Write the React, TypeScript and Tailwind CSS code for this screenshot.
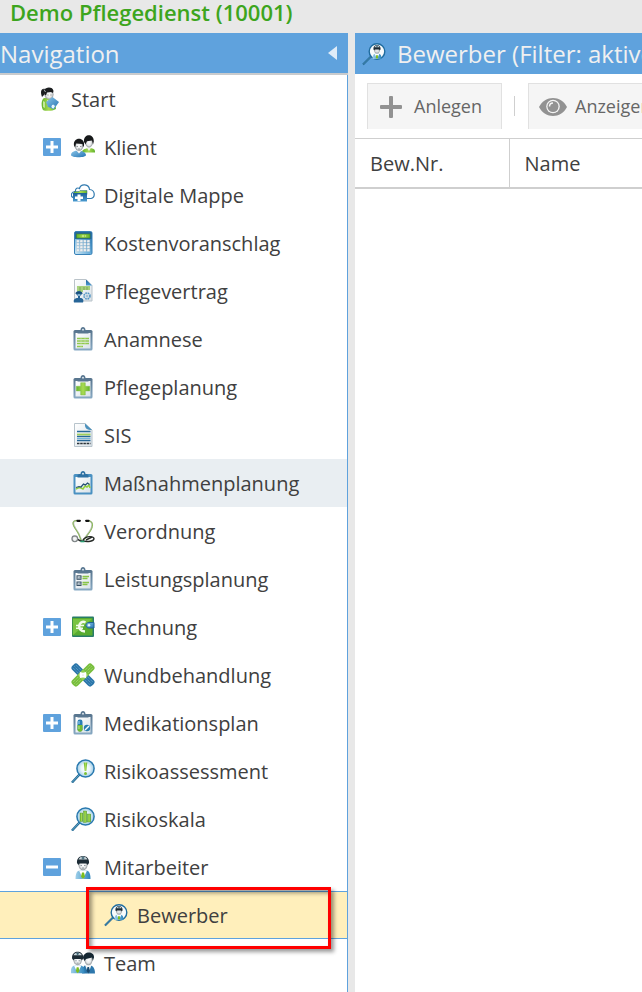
import type { ReactNode } from "react";

const Svg = ({ children, size = 24 }: { children: ReactNode; size?: number }) => (
  <svg width={size} height={size} viewBox="0 0 24 24" fill="none" aria-hidden="true" className="block shrink-0">
    {children}
  </svg>
);

/* Gradients shared by all the navigation icons */
const IconDefs = () => (
  <svg width="0" height="0" className="absolute" aria-hidden="true">
    <defs>
      <linearGradient id="blue" x1="0" y1="0" x2="1" y2="1">
        <stop offset="0" stopColor="#8cc6e8" />
        <stop offset="1" stopColor="#2474b4" />
      </linearGradient>
      <linearGradient id="dark" x1="0" y1="0" x2="0" y2="1">
        <stop offset="0" stopColor="#1c5e96" />
        <stop offset="1" stopColor="#4a9bd0" />
      </linearGradient>
      <linearGradient id="green" x1="0" y1="0" x2="1" y2="0">
        <stop offset="0" stopColor="#62b32c" />
        <stop offset="0.5" stopColor="#a8da52" />
        <stop offset="1" stopColor="#62b32c" />
      </linearGradient>
      <linearGradient id="steel" x1="0" y1="0" x2="0" y2="1">
        <stop offset="0" stopColor="#56738c" />
        <stop offset="1" stopColor="#88aac4" />
      </linearGradient>
      <linearGradient id="paper" x1="0" y1="0" x2="1" y2="1">
        <stop offset="0" stopColor="#ffffff" />
        <stop offset="1" stopColor="#d9e2e8" />
      </linearGradient>
      <linearGradient id="calc" x1="0" y1="1" x2="1" y2="0">
        <stop offset="0" stopColor="#d4edf8" />
        <stop offset="0.5" stopColor="#63a9d7" />
        <stop offset="1" stopColor="#1d68a5" />
      </linearGradient>
      <linearGradient id="coat" x1="0" y1="0" x2="1" y2="0">
        <stop offset="0" stopColor="#9fd0ea" />
        <stop offset="1" stopColor="#2f86bd" />
      </linearGradient>
      <radialGradient id="face">
        <stop offset="0" stopColor="#ffffff" />
        <stop offset="0.6" stopColor="#e6e8e9" />
        <stop offset="1" stopColor="#8e9498" />
      </radialGradient>
      <radialGradient id="glass">
        <stop offset="0" stopColor="#ffffff" />
        <stop offset="0.5" stopColor="#eaf5fa" />
        <stop offset="1" stopColor="#9ccbe6" />
      </radialGradient>
    </defs>
  </svg>
);

const StartIcon = () => (
  <Svg>
    <path d="M6 11c-3 2-3 8-1 12 3 1.500 10 1 13-1l-1-7-6-4Z" fill="url(#green)" />
    <path d="m5 14 2 1v6l-2-1Z" fill="#c3e89a" />
    <path d="m9 13 3 2-2 4Z" fill="#f2f6ee" />
    <ellipse cx="11" cy="7.500" rx="4.500" ry="5" fill="url(#face)" />
    <path d="M6 3c2-3.500 9-3.500 9.500 1l-.5 2-2-1-4 .5-1 3-1.500-1L6 6Z" fill="#1b1e20" />
    <path d="M7 2C3 1 2 5 4 10l2-2 1-3Z" fill="#1b1e20" />
    <path d="M6 2.500 7.500 5" stroke="#cfd5d8" strokeWidth=".8" />
    <path d="M9.500 8h1m2 0h1" stroke="#555" strokeWidth=".8" />
    <path d="m8 15 6.500-5 6.500 5-5 7-6-2Z" fill="url(#blue)" />
    <path d="m13 19 2-2 2.500 2-2 3-2-1Z" fill="#e8f6fc" stroke="#408fc5" strokeWidth=".6" />
  </Svg>
);

const KlientIcon = () => (
  <Svg>
    <path d="M11 17c0-4 12-6 13-1v1.500H13Z" fill="url(#green)" />
    <path d="m15.500 12 2.500 4 2.500-4Z" fill="#f2f2f2" />
    <ellipse cx="18" cy="7.500" rx="3.800" ry="5" fill="url(#face)" />
    <path d="M13 7c-1-8.500 10-9 9.800-.5l-.8 3-1-4-5 .8-1.500 3Z" fill="#17191a" />
    <path d="M0 20c0-6 14-6 15 0 0 3-15 3-15 0Z" fill="url(#blue)" />
    <path d="m5 15 3 3.500 3-3.500Z" fill="#f8f8f8" />
    <ellipse cx="8" cy="11" rx="4.200" ry="5" fill="url(#face)" />
    <path d="M3 10.500c-1.500-9 11.500-9 10 0l-1 2-.5-3.500-6.500-.5-1 4Z" fill="#17191a" />
    <path d="M5.500 11.500H7m2 0h1.500M7 14h2" stroke="#6d7376" strokeWidth=".7" />
  </Svg>
);

const MappeIcon = () => (
  <Svg>
    <path d="M4 15C-1 15-1 9 4.500 8.500 4 5 7 4.500 8.500 5.500 10 0 18 1 18.500 6.500 24.500 7 24.500 14.500 20 15.500h-4" fill="#fff" stroke="#317aaf" strokeWidth="1.200" />
    <path d="M3 8.500h5l1-1h7v4H3Z" fill="url(#green)" stroke="#2d6b8e" strokeWidth=".5" />
    <path d="M2 10h14v8.500H2Z" fill="url(#dark)" />
    <path d="M6.500 11.500h3v2H12v2.500H9.500v2h-3v-2H4v-2.500h2.500Z" fill="#fff" />
  </Svg>
);

const CalcIcon = () => (
  <Svg>
    <rect x="3.500" y="0.500" width="17.500" height="23" rx="1.500" fill="url(#calc)" stroke="#3982b8" />
    <rect x="4" y="1" width="16.500" height="7" fill="#25689c" />
    <rect x="5.500" y="3" width="13.500" height="4" fill="url(#green)" stroke="#3f852c" strokeWidth=".6" />
    <path d="M11 5h2m1 0h1" stroke="#d8f3ad" />
    {[9, 12, 15, 18].map((y) =>
      [5.5, 9, 12.5, 16].map((x) => (
        <rect key={`${x}-${y}`} x={x} y={y} width="2.800" height="2.400" rx=".5" fill="#f0f2f2" stroke="#a5b8c4" strokeWidth=".3" />
      )),
    )}
  </Svg>
);

const VertragIcon = () => (
  <Svg>
    <path d="M3.500 .5H15l6 6v15.500H3.500Z" fill="url(#paper)" stroke="#bac3c9" />
    <path d="M15 .5v6h6Z" fill="url(#dark)" />
    <path d="M6 8h13M6 10h13M6 12h6" stroke="#8fc653" strokeWidth="1.400" />
    <path d="M9 8v4m4-4v3m3-3v3" stroke="#54783b" strokeWidth=".5" />
    <circle cx="16" cy="17" r="3" stroke="#5596c4" strokeWidth="1.600" strokeDasharray="1.700 .7" />
    <circle cx="16" cy="17" r="1" fill="#fff" stroke="#3475a5" strokeWidth=".5" />
    <path d="M5 15c-1-4 7-4 6 0l-2 2v2c3 0 4 2 3 4.500H3c-1-3 1-4.500 4-4.500v-2Z" fill="#276597" />
    <path d="M4 14.500c1-2.500 7-2.500 8 0Z" fill="#174c78" />
    <path d="M6.500 15h3l-.5 2H7Z" fill="#84b2cf" />
  </Svg>
);

const Board = ({ children, blue = false }: { children: ReactNode; blue?: boolean }) => (
  <Svg>
    <rect x="2.500" y="3" width="19" height="20.500" rx="1.500" fill={blue ? "#4a91c2" : "url(#steel)"} />
    <rect x="4.500" y="6" width="15" height="15.500" fill="url(#paper)" />
    <path d="M6.500 6.500V4.500C6.500 3.500 8 3 9.500 3c0-4 5-4 5 0 1.500 0 3 .5 3 1.500v2Z" fill={blue ? "#2f71a3" : "#587690"} />
    <circle cx="12" cy="2.700" r=".9" fill="#e9f2f6" />
    {children}
  </Svg>
);

const AnamneseIcon = () => (
  <Board>
    <path d="M6 11.500h12M6 14h12M6 16.500h12M6 19.500h6" stroke="#91c94e" strokeWidth="1.300" />
    <path d="M10 11v9m4-9v7" stroke="#d4ecb7" strokeWidth=".5" />
  </Board>
);

const PlanungIcon = () => (
  <Board>
    <path d="M9.700 7.700h4.600v3.600h4.400v4.600h-4.400v4H9.700v-4H5.300v-4.600h4.400Z" fill="url(#green)" stroke="#83bf4a" strokeWidth=".5" />
  </Board>
);

const SisIcon = () => (
  <Svg>
    <path d="M3.500 .5H14l7 6.500v16.500H3.500Z" fill="url(#paper)" stroke="#b8c4cc" />
    <path d="M14 .5c-.5 5 2 6.500 7 6.500Z" fill="#4b91bd" />
    <path d="M6 8.500h13.500M6 13.500h13.500M6 17.500h13.500" stroke="#266899" strokeWidth="1.500" />
    <path d="M6 11.500h13.500" stroke="#9fcf5d" strokeWidth="1.800" />
    <path d="M6 15.500h13.500" stroke="#74b7da" />
    <path d="M6 20.500h13.500" stroke="#2b3338" strokeWidth="1.500" strokeDasharray="2.500 .7" />
  </Svg>
);

const MassnahmenIcon = () => (
  <Board blue>
    <path d="m5 18 3-1.500 2 .5 2 1 2-3 2 1 2-2 1 3" stroke="#92cf3e" strokeWidth="1.500" />
    <path d="m5 16.500 3-1 2 .5 2.500-3 2 1 2-2 2 1.500" stroke="#245074" strokeWidth="1.200" />
  </Board>
);

const StethoscopeIcon = () => (
  <Svg>
    <path d="M7 1.700C1 1 1.500 5 4.500 9.500 8 14 9 17 10.500 21.500M17 1.700c6 .3 4.500 7 1.500 11L12 21.500" stroke="#b4beae" strokeWidth="1.600" />
    <path d="M7 1.700C.7 1 1 5 4 9.500 7.500 14 8.500 17 10 21.500M17 1.700c6.500.3 5 7 2 11L12.500 21.500" stroke="#7db83c" strokeWidth=".8" />
    <path d="M12 21c3-4.500 11-4 11-1.500 0 3-6 3.500-12 2.500-3 0-4-2-5-2" stroke="#262a27" strokeWidth="1.400" />
    <path d="m15 21 6-3" stroke="#262a27" strokeWidth="1.400" />
    <path d="M6.500 1.800h2.300m6.400 0h2.300" stroke="#111" strokeWidth="2.300" strokeLinecap="round" />
    <circle cx="3.800" cy="19.800" r="2.900" fill="url(#face)" stroke="#7e8485" strokeWidth="1.100" />
    <path d="M9.500 22.500h4" stroke="#2a9d73" strokeWidth="1.600" />
  </Svg>
);

const LeistungIcon = () => (
  <Board>
    <path d="M11.500 9.500H18m-6.500 2h5m-5 4H18m-6.500 2h5" stroke="#88c348" strokeWidth="1.600" />
    <rect x="6" y="8.800" width="4" height="3.500" fill="#d5dce1" stroke="#385064" />
    <rect x="6" y="15" width="4" height="3.500" fill="#d5dce1" stroke="#385064" />
    <path d="m7 10.500 1 1 2-2m-3 7 1 1 2-2" stroke="#49677e" strokeWidth=".8" />
  </Board>
);

const RechnungIcon = () => (
  <Svg>
    <rect x="1" y="1.500" width="22" height="20.500" rx="1" fill="#287c69" />
    <rect x="1.500" y="3" width="20" height="17.500" fill="#58ab2f" />
    <path d="m2 20 19-16H2Z" fill="#79c342" />
    <path d="M14.500 7.500C8 4 4.500 16 14 16.500" stroke="#f2faeb" strokeWidth="2.500" />
    <path d="M5 10.500h8M5 13.300h7" stroke="#f2faeb" strokeWidth="1.400" />
    <path d="M23 7.500h-5c-4 0-4 5.500 0 5.500h5Z" fill="url(#blue)" stroke="#216594" />
    <circle cx="18" cy="10.300" r="1.200" fill="#e5f5fb" />
  </Svg>
);

const WundIcon = () => (
  <Svg>
    <g transform="rotate(45 12 12)">
      <rect x="-2" y="8" width="28" height="8" rx="3" fill="#2b76aa" />
      <path d="M0 10h7m10 0h7M0 12h7m10 0h7M0 14h7m10 0h7" stroke="#85b9da" strokeWidth=".7" strokeDasharray="1 1" />
    </g>
    <g transform="rotate(-45 12 12)">
      <rect x="-2" y="8" width="28" height="8" rx="3" fill="#78be3d" />
      <path d="M0 10h7m10 0h7M0 12h7m10 0h7M0 14h7m10 0h7" stroke="#c1e792" strokeWidth=".7" strokeDasharray="1 1" />
      <rect x="8" y="8" width="8" height="8" fill="#8fcc52" />
    </g>
    <path d="m9 9 3 .8L15 9l.5 3-.5 3-3-.5L9 15l-.5-3Z" fill="#fff" />
    <circle cx="12" cy="12" r=".6" fill="#c2c9c3" />
  </Svg>
);

const MedikationIcon = () => (
  <Board>
    <rect x="6.500" y="8.500" width="5" height="12" rx="2.300" fill="#287eb4" />
    <path d="M6.500 14h5v4.500c0 3-5 3-5 0Z" fill="#73bb31" />
    <path d="M8 10v3" stroke="#a9d7f0" />
    <path d="M8 15v3" stroke="#c1e99a" />
    <circle cx="16" cy="17" r="3.200" fill="#287db0" />
    <path d="m14 19 4-4" stroke="#f3fafc" strokeWidth="1.500" />
  </Board>
);

const Magnifier = ({ children }: { children: ReactNode }) => (
  <Svg>
    <path d="m8.500 15.500-7.500 8" stroke="#22658f" strokeWidth="2.400" />
    <path d="m8.500 15.500-7.500 8" stroke="#63afd2" strokeWidth=".9" />
    <circle cx="14.500" cy="9.500" r="8.600" fill="url(#glass)" stroke="#2878ae" strokeWidth="1.500" />
    {children}
  </Svg>
);

const AssessmentIcon = () => (
  <Magnifier>
    <path d="M12.700 3.500h3.600l-1 8.500h-1.600Z" fill="url(#green)" />
    <circle cx="14.500" cy="14.500" r="1.500" fill="#7bc037" />
  </Magnifier>
);

const SkalaIcon = () => (
  <Magnifier>
    <rect x="9" y="6" width="2.800" height="8.500" fill="url(#green)" stroke="#4f922e" strokeWidth=".4" />
    <rect x="12.500" y="4" width="3.200" height="11.500" fill="url(#green)" stroke="#4f922e" strokeWidth=".4" />
    <rect x="16.400" y="7" width="3.300" height="8" fill="url(#green)" stroke="#4f922e" strokeWidth=".4" />
  </Magnifier>
);

/* Head and shoulders of a nurse with a cap */
const Nurse = () => (
  <>
    <path d="M4.500 24c0-6 1.500-8.500 5-8.500h5c3.500 0 5 2.500 5 8.500Z" fill="url(#coat)" />
    <path d="m8 15.500 4 8.500 4-8.500Z" fill="#fff" />
    <path d="M11 17.500h2l1 4-2 2.500-2-2.500Z" fill="#7cbd1e" />
    <ellipse cx="12" cy="10" rx="4.500" ry="5.200" fill="url(#face)" />
    <path d="M6 8c-1-9.500 13-9.500 12 0l-1.300 2-1.200-1.500h-7L7.300 10Z" fill="#1c2b35" />
    <path d="M7.500 4.500C9 .5 15 .5 16.500 4.500Z" fill="#c9d5da" />
    <path d="M12 1.500v3M10.500 3h3" stroke="#2f5868" />
    <path d="M9.500 10.500h1.500m2 0h1.500M11 13h2" stroke="#65757e" strokeWidth=".7" />
  </>
);

const MitarbeiterIcon = () => (
  <Svg>
    <Nurse />
  </Svg>
);

const BewerberIcon = () => (
  <Svg>
    <path d="m9 14.500-8 8" stroke="#1f628e" strokeWidth="2" />
    <path d="m9 14.500-8 8" stroke="#6ab4d6" strokeWidth=".6" />
    <circle cx="15" cy="9.500" r="7.800" fill="#f8fbfc" stroke="#1f6c9f" strokeWidth="1.400" />
    <g transform="translate(7.800 2.500) scale(.6)">
      <Nurse />
    </g>
  </Svg>
);

const TeamIcon = () => (
  <Svg>
    <path d="M11 22.500c0-7 2-8.500 6-8.500s7 2 7 8.500Z" fill="#2d77ac" />
    <path d="m14 14 3.300 8.500L20.500 14Z" fill="#f5f7f8" />
    <path d="M16.500 16h1.500l1 4-1.700 2.500-1.800-2.500Z" fill="#174a72" />
    <ellipse cx="17.500" cy="9" rx="4" ry="5.200" fill="url(#face)" />
    <path d="M12 7c0-7 11.500-7.500 11-.5l-1.200 3.500-.8-3.500-6 1.500-1.500 2Z" fill="#142632" />
    <g transform="translate(-4.500 0) scale(.93)">
      <Nurse />
    </g>
  </Svg>
);

type Item = {
  label: string;
  icon: ReactNode;
  toggle?: "plus" | "minus";
  level?: 0 | 1 | 2;
  state?: "hover" | "selected";
};

const items: Item[] = [
  { label: "Start", icon: <StartIcon />, level: 0 },
  { label: "Klient", icon: <KlientIcon />, toggle: "plus" },
  { label: "Digitale Mappe", icon: <MappeIcon /> },
  { label: "Kostenvoranschlag", icon: <CalcIcon /> },
  { label: "Pflegevertrag", icon: <VertragIcon /> },
  { label: "Anamnese", icon: <AnamneseIcon /> },
  { label: "Pflegeplanung", icon: <PlanungIcon /> },
  { label: "SIS", icon: <SisIcon /> },
  { label: "Maßnahmenplanung", icon: <MassnahmenIcon />, state: "hover" },
  { label: "Verordnung", icon: <StethoscopeIcon /> },
  { label: "Leistungsplanung", icon: <LeistungIcon /> },
  { label: "Rechnung", icon: <RechnungIcon />, toggle: "plus" },
  { label: "Wundbehandlung", icon: <WundIcon /> },
  { label: "Medikationsplan", icon: <MedikationIcon />, toggle: "plus" },
  { label: "Risikoassessment", icon: <AssessmentIcon /> },
  { label: "Risikoskala", icon: <SkalaIcon /> },
  { label: "Mitarbeiter", icon: <MitarbeiterIcon />, toggle: "minus" },
  { label: "Bewerber", icon: <BewerberIcon />, level: 2, state: "selected" },
  { label: "Team", icon: <TeamIcon /> },
];

const indents = ["pl-[38px]", "pl-[43px]", "pl-[104px]"];

const NavRow = ({ label, icon, toggle, level = 1, state }: Item) => {
  const background =
    state === "hover"
      ? "bg-[#e9eef2]"
      : state === "selected"
        ? "border-y border-[#5fa2dd] bg-[#ffefbb]"
        : "";
  return (
    <li className={`relative flex h-12 items-center ${indents[level]} ${background}`}>
      {level === 1 && (
        <span className="w-7 shrink-0">
          {toggle && (
            <button
              type="button"
              aria-label={`${label} ${toggle === "plus" ? "öffnen" : "schließen"}`}
              className="flex size-[18px] items-center justify-center rounded-[1px] bg-[#5fa2dd]"
            >
              <svg width="12" height="12" viewBox="0 0 12 12" stroke="#fff" strokeWidth="3" aria-hidden="true">
                <path d={toggle === "plus" ? "M0 6h12M6 0v12" : "M0 6h12"} />
              </svg>
            </button>
          )}
        </span>
      )}
      <a href="#" className="flex items-center gap-[9px] text-xl leading-6">
        {icon}
        <span className="pt-0.5">{label}</span>
      </a>
      {state === "selected" && (
        <span className="pointer-events-none absolute -top-[5px] right-4 -bottom-[11px] left-[86px] border-3 border-[#ff0000] shadow-[3px_3px_4px_rgba(0,0,0,0.4),inset_3px_3px_4px_rgba(0,0,0,0.4)]" />
      )}
    </li>
  );
};

const PlusIcon = () => (
  <svg width="22" height="22" viewBox="0 0 22 22" fill="#929292" aria-hidden="true" className="shrink-0">
    <path d="M9 1q0-1 1-1h2q1 0 1 1v8h8q1 0 1 1v2q0 1-1 1h-8v8q0 1-1 1h-2q-1 0-1-1v-8H1q-1 0-1-1v-2q0-1 1-1h8Z" />
  </svg>
);

const EyeIcon = () => (
  <svg width="28" height="20" viewBox="0 0 28 20" aria-hidden="true" className="shrink-0">
    <path d="M0 10C6-2 22-2 28 10 22 22 6 22 0 10Z" fill="#929292" />
    <circle cx="14" cy="9.500" r="6.800" fill="#f5f5f5" />
    <circle cx="14" cy="9.500" r="5.500" fill="#929292" />
    <path d="M10.500 9.500c0-2 1.500-3.500 3.500-3.500" fill="none" stroke="#f5f5f5" strokeWidth="1.500" />
  </svg>
);

const toolButton =
  "flex h-[46px] shrink-0 items-center border border-b-0 border-[#e1e1e1] bg-[#f5f5f5] text-lg leading-6 text-[#666]";

export default function App() {
  return (
    <div className="flex min-h-screen flex-col bg-[#e8e8e8] font-['Open_Sans',sans-serif] text-[#404040]">
      <IconDefs />
      <header className="h-[33px] pl-[10px]">
        <h1 className="text-[22px] leading-6 font-semibold whitespace-nowrap text-[#3da51d]">
          Demo Pflegedienst (10001)
        </h1>
      </header>
      <div className="flex flex-1 gap-[7px]">
        <aside className="flex w-[348px] shrink-0 flex-col bg-white">
          <div className="flex h-[42px] items-center justify-between border-b-2 border-[#c9cbcd] bg-[#5fa2dd] pr-[11px] text-2xl text-[#f0f0f0]">
            <h2 className="pt-0.5">Navigation</h2>
            <button type="button" aria-label="Navigation einklappen">
              <svg width="9" height="14" viewBox="0 0 9 14" fill="#dfecf8" aria-hidden="true">
                <path d="M9 0v14L0 7Z" />
              </svg>
            </button>
          </div>
          <nav aria-label="Navigation" className="flex-1 border-r border-[#5fa2dd]">
            <ul>
              {items.map((item) => (
                <NavRow key={item.label} {...item} />
              ))}
            </ul>
          </nav>
        </aside>
        <main className="min-w-0 flex-1 overflow-hidden bg-white">
          <div className="flex h-[41px] items-center gap-[11px] bg-[#5fa2dd] pl-[7px] text-2xl whitespace-nowrap text-[#f0f0f0]">
            <BewerberIcon />
            <h2>Bewerber (Filter: aktive)</h2>
          </div>
          <div className="flex h-16 items-center px-3">
            <button type="button" className={`${toolButton} gap-3 px-3 pr-[19px]`}>
              <PlusIcon />
              <span className="pb-0.5">Anlegen</span>
            </button>
            <span className="mr-[13px] ml-3 h-5 w-px shrink-0 bg-[#cfcfcf]" />
            <button type="button" className={`${toolButton} gap-2 px-[10px]`}>
              <EyeIcon />
              <span className="pb-0.5">Anzeigen</span>
            </button>
          </div>
          <table className="w-full table-fixed border-collapse text-left text-xl">
            <thead>
              <tr className="h-[49px] border-t border-b-2 border-[#cfcfcf]">
                <th scope="col" className="w-[154px] border-r border-[#cfcfcf] px-[15px] pt-0.5 font-normal">
                  Bew.Nr.
                </th>
                <th scope="col" className="px-[15px] pt-0.5 font-normal">
                  Name
                </th>
              </tr>
            </thead>
          </table>
        </main>
      </div>
    </div>
  );
}
